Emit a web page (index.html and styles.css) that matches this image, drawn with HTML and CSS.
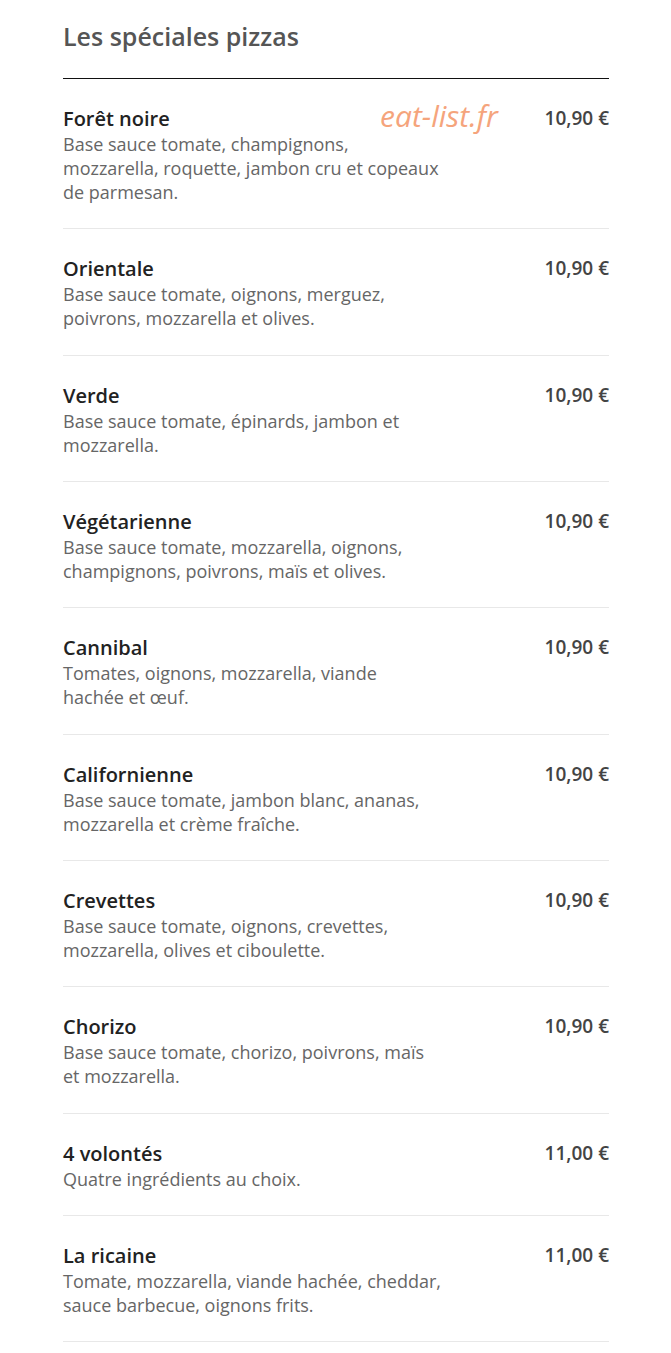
FILE: index.html
```html
<!DOCTYPE html>
<html lang="fr">
<head>
<meta charset="UTF-8">
<meta name="viewport" content="width=device-width, initial-scale=1.0">
<title>Les spéciales pizzas</title>
<link rel="stylesheet" href="styles.css">
</head>
<body>

<div class="menu">
  <h2 class="menu-title">Les spéciales pizzas</h2>

  <div class="item">
    <div class="item-text">
      <div class="item-name">Forêt noire</div>
      <div class="item-desc">Base sauce tomate, champignons, mozzarella, roquette, jambon cru et copeaux de parmesan.</div>
    </div>
    <div class="item-price">10,90 €</div>
    <span class="watermark">eat-list.fr</span>
  </div>

  <div class="item">
    <div class="item-text">
      <div class="item-name">Orientale</div>
      <div class="item-desc">Base sauce tomate, oignons, merguez, poivrons, mozzarella et olives.</div>
    </div>
    <div class="item-price">10,90 €</div>
  </div>

  <div class="item">
    <div class="item-text">
      <div class="item-name">Verde</div>
      <div class="item-desc">Base sauce tomate, épinards, jambon et mozzarella.</div>
    </div>
    <div class="item-price">10,90 €</div>
  </div>

  <div class="item">
    <div class="item-text">
      <div class="item-name">Végétarienne</div>
      <div class="item-desc">Base sauce tomate, mozzarella, oignons, champignons, poivrons, maïs et olives.</div>
    </div>
    <div class="item-price">10,90 €</div>
  </div>

  <div class="item">
    <div class="item-text">
      <div class="item-name">Cannibal</div>
      <div class="item-desc">Tomates, oignons, mozzarella, viande hachée et œuf.</div>
    </div>
    <div class="item-price">10,90 €</div>
  </div>

  <div class="item">
    <div class="item-text">
      <div class="item-name">Californienne</div>
      <div class="item-desc">Base sauce tomate, jambon blanc, ananas, mozzarella et crème fraîche.</div>
    </div>
    <div class="item-price">10,90 €</div>
  </div>

  <div class="item">
    <div class="item-text">
      <div class="item-name">Crevettes</div>
      <div class="item-desc">Base sauce tomate, oignons, crevettes, mozzarella, olives et ciboulette.</div>
    </div>
    <div class="item-price">10,90 €</div>
  </div>

  <div class="item">
    <div class="item-text">
      <div class="item-name">Chorizo</div>
      <div class="item-desc">Base sauce tomate, chorizo, poivrons, maïs et mozzarella.</div>
    </div>
    <div class="item-price">10,90 €</div>
  </div>

  <div class="item">
    <div class="item-text">
      <div class="item-name">4 volontés</div>
      <div class="item-desc">Quatre ingrédients au choix.</div>
    </div>
    <div class="item-price">11,00 €</div>
  </div>

  <div class="item">
    <div class="item-text">
      <div class="item-name">La ricaine</div>
      <div class="item-desc">Tomate, mozzarella, viande hachée, cheddar, sauce barbecue, oignons frits.</div>
    </div>
    <div class="item-price">11,00 €</div>
  </div>
</div>

</body>
</html>
```

FILE: styles.css
```css
body {
  font-family: "Open Sans", sans-serif;
  margin: 0;
  padding: 0;
  background-color: #fff;
}
.menu {
  width: 546px;
  margin: 0 0 0 63px;
  padding-bottom: 8px;
}
.menu-title {
  margin: 0;
  padding-top: 19px;
  padding-bottom: 25px;
  font-size: 25px;
  line-height: 34px;
  font-weight: 600;
  color: #555;
  border-bottom: 1px solid #111;
}
.item {
  position: relative;
  display: flex;
  justify-content: space-between;
  align-items: flex-start;
  padding: 26px 0 24.33px;
  border-bottom: 1px solid #e8e8e8;
}
.item-text {
  width: 378px;
}
.item-name {
  font-size: 20px;
  line-height: 27px;
  font-weight: 600;
  color: #222;
}
.item-desc {
  font-size: 18px;
  line-height: 24px;
  color: #666;
}
.item-price {
  font-size: 19px;
  line-height: 27px;
  font-weight: 600;
  color: #444;
}
.watermark {
  position: absolute;
  left: 317px;
  top: 16px;
  font-size: 30px;
  font-style: italic;
  color: #f5a47c;
}
```
